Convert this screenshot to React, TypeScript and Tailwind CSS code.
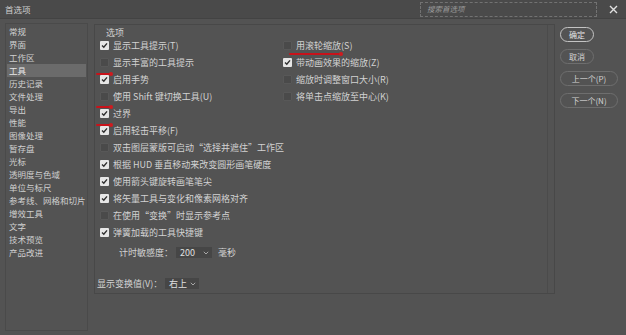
import React from 'react';

const navItems = [
  '常规',
  '界面',
  '工作区',
  '工具',
  '历史记录',
  '文件处理',
  '导出',
  '性能',
  '图像处理',
  '暂存盘',
  '光标',
  '透明度与色域',
  '单位与标尺',
  '参考线、网格和切片',
  '增效工具',
  '文字',
  '技术预览',
  '产品改进',
];

const leftOptions: { label: string; checked: boolean }[] = [
  { label: '显示工具提示(T)', checked: true },
  { label: '显示丰富的工具提示', checked: false },
  { label: '启用手势', checked: true },
  { label: '使用 Shift 键切换工具(U)', checked: false },
  { label: '过界', checked: true },
  { label: '启用轻击平移(F)', checked: true },
  { label: '双击图层蒙版可启动“选择并遮住”工作区', checked: false },
  { label: '根据 HUD 垂直移动来改变圆形画笔硬度', checked: true },
  { label: '使用箭头键旋转画笔笔尖', checked: true },
  { label: '将矢量工具与变化和像素网格对齐', checked: true },
  { label: '在使用“变换”时显示参考点', checked: false },
  { label: '弹簧加载的工具快捷键', checked: true },
];

const rightOptions: { label: string; checked: boolean }[] = [
  { label: '用滚轮缩放(S)', checked: false },
  { label: '带动画效果的缩放(Z)', checked: true },
  { label: '缩放时调整窗口大小(R)', checked: false },
  { label: '将单击点缩放至中心(K)', checked: false },
];

function Check({ checked }: { checked: boolean }) {
  if (checked) {
    return (
      <span className="flex h-[9px] w-[9px] shrink-0 items-center justify-center rounded-[1px] bg-[#e6e6e6]">
        <svg width="7" height="7" viewBox="0 0 7 7">
          <path d="M1 3.6 L2.8 5.3 L6 1.4" fill="none" stroke="#2e2e2e" strokeWidth="1.4" />
        </svg>
      </span>
    );
  }
  return <span className="h-[9px] w-[9px] shrink-0 rounded-[1px] border border-[#585858] bg-[#4a4a4a]" />;
}

function OptionRow({ label, checked }: { label: string; checked: boolean }) {
  return (
    <div className="flex h-[17px] items-center gap-[4px] pl-[3px] leading-none">
      <Check checked={checked} />
      <span className="whitespace-nowrap">{label}</span>
    </div>
  );
}

function Caret() {
  return (
    <svg width="6" height="4" viewBox="0 0 6 4" className="shrink-0">
      <path d="M0.8 0.8 L3 3 L5.2 0.8" fill="none" stroke="#a8a8a8" strokeWidth="1" />
    </svg>
  );
}

function RedMark({ className }: { className: string }) {
  return (
    <span className={`absolute flex items-center ${className}`}>
      <span className="h-[2px] flex-1 rounded-full bg-[#c8121a]" />
      <span className="-ml-[1px] h-[4px] w-[4px] rounded-full bg-[#d11a1f]" />
    </span>
  );
}

export default function App() {
  return (
    <div className="relative flex h-[335px] w-[626px] flex-col overflow-hidden bg-[#535353] font-['Noto_Sans_CJK_SC','Noto_Sans',sans-serif] text-[#d2d2d2]">
      <div className="flex h-[19px] shrink-0 items-center border-b border-[#434343] bg-[#4a4a4a] pl-[5px] pr-[8px]">
        <span className="text-[8.5px] leading-none text-[#d0d0d0]">首选项</span>
        <div className="ml-auto flex h-[15px] w-[177px] items-center border border-dashed border-[#727272] pl-[6px]">
          <span className="text-[7.5px] italic leading-none text-[#9a9a9a]">搜索首选项</span>
        </div>
        <svg width="9" height="9" viewBox="0 0 9 9" className="ml-[12px]">
          <path d="M1 1 L8 8 M8 1 L1 8" stroke="#e0e0e0" strokeWidth="1.4" />
        </svg>
      </div>

      <div className="flex flex-1 items-start">
        <div className="ml-[5px] mt-[4px] h-[308px] w-[83px] border border-[#4a4a4a] pt-[1px]">
          {navItems.map((item) => (
            <div
              key={item}
              className={`mx-[1px] flex h-[13px] items-center pl-[2px] text-[8.5px] leading-none ${item === '工具' ? 'bg-[#6b6b6b] text-[#e8e8e8]' : 'text-[#d0d0d0]'}`}
            >
              {item}
            </div>
          ))}
        </div>

        <div className="ml-[6px] mt-[5px] flex h-[270px] w-[461px] border border-[#484848] text-[9px]">
          <div className="flex flex-1 flex-col">
            <div className="flex h-[12px] items-center pl-[11px] pt-[2px] leading-none text-[#d0d0d0]">选项</div>
            <div className="flex">
              <div className="flex w-[185px] flex-col pl-[2px]">
                {leftOptions.map((o) => (
                  <OptionRow key={o.label} label={o.label} checked={o.checked} />
                ))}
                <div className="mt-[3px] flex h-[17px] items-center pl-[22px] leading-none">
                  <span className="w-[57px] whitespace-nowrap">计时敏感度：</span>
                  <div className="flex h-[11px] w-[36px] items-center bg-[#464646] pl-[4px] pr-[3px]">
                    <span className="text-[#e0e0e0]">200</span>
                    <span className="ml-auto"><Caret /></span>
                  </div>
                  <span className="ml-[6px]">毫秒</span>
                </div>
                <div className="mt-[14px] flex h-[17px] items-center leading-none">
                  <span className="w-[68px] whitespace-nowrap">显示变换值(V)：</span>
                  <div className="flex h-[11px] w-[34px] items-center bg-[#464646] pl-[4px] pr-[3px]">
                    <span className="text-[#e0e0e0]">右上</span>
                    <span className="ml-auto"><Caret /></span>
                  </div>
                </div>
              </div>
              <div className="flex flex-col">
                {rightOptions.map((o) => (
                  <OptionRow key={o.label} label={o.label} checked={o.checked} />
                ))}
              </div>
            </div>
          </div>
          <div className="w-[7px] shrink-0 border-l border-[#4b4b4b]" />
        </div>

        <div className="ml-[5px] mt-[8px] flex flex-col items-start gap-[7px] text-[8px] leading-none">
          <button className="flex h-[15px] w-[34px] items-center justify-center rounded-full border-[1.5px] border-[#c4c4c4] text-[#e4e4e4]">确定</button>
          <button className="flex h-[15px] w-[34px] items-center justify-center rounded-full border border-[#6e6e6e] text-[#d4d4d4]">取消</button>
          <button className="flex h-[15px] w-[58px] items-center justify-center rounded-full border border-[#6e6e6e] text-[#d4d4d4]">上一个(P)</button>
          <button className="flex h-[15px] w-[58px] items-center justify-center rounded-full border border-[#6e6e6e] text-[#d4d4d4]">下一个(N)</button>
        </div>
      </div>

      <RedMark className="left-[96px] top-[72px] w-[17px]" />
      <RedMark className="left-[96px] top-[105px] w-[17px]" />
      <RedMark className="left-[96px] top-[123px] w-[17px]" />
      <RedMark className="left-[289px] top-[52px] w-[54px]" />
    </div>
  );
}
